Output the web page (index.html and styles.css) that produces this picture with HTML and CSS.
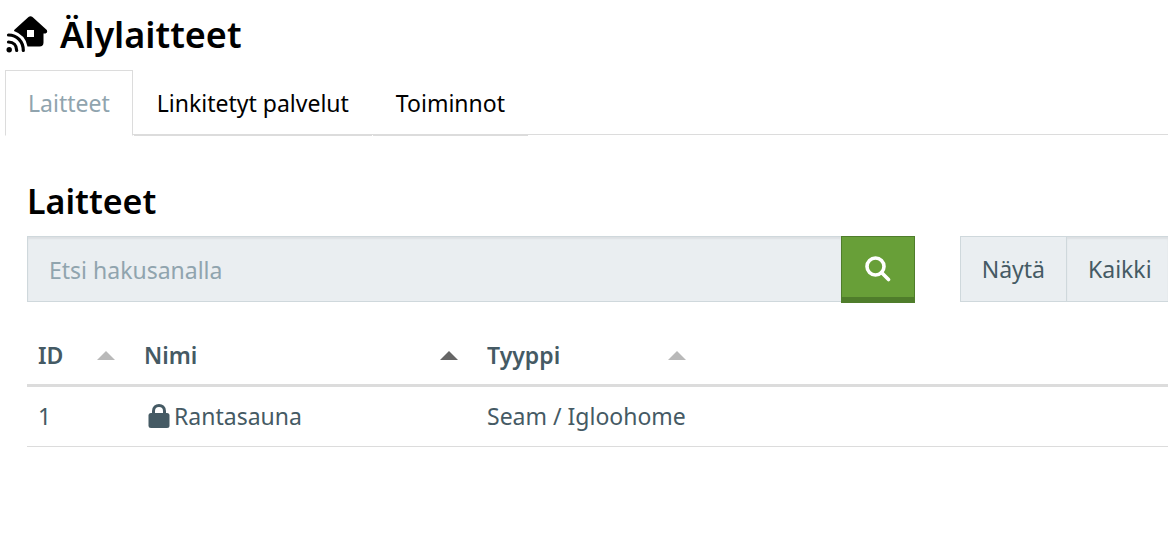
FILE: index.html
```html
<!DOCTYPE html>
<html lang="fi">
<head>
<meta charset="utf-8">
<meta name="viewport" content="width=device-width, initial-scale=1">
<title>Älylaitteet</title>
<link rel="stylesheet" href="styles.css">
</head>
<body>
<header class="page-header">
  <svg class="house-icon" viewBox="0 0 42 38" aria-hidden="true">
    <path fill="currentColor" fill-rule="evenodd" d="M22.500 1Q24.500 -.5 26.500 1L40.800 14Q42 16.500 39.500 17.500H37.500V26.500Q37.500 30.500 33.500 30.500H21.500Q19.500 19 8 15Q8 14 9 13.200L22.500 1ZM21 14V21H28V14Z"/>
    <circle cx="3.200" cy="33.800" r="2.700" fill="currentColor"/>
    <path fill="none" stroke="currentColor" stroke-width="3.200" stroke-linecap="round" d="M2.500 19C11 19 17.300 25.500 17.300 34.500M2.500 26C7.500 26 10.700 29.500 10.700 34.500"/>
  </svg>
  <h1 class="page-title">Älylaitteet</h1>
</header>
<nav class="tabs">
  <a class="tab tab-active" href="#laitteet" aria-current="page">Laitteet</a>
  <a class="tab" href="#palvelut">Linkitetyt palvelut</a>
  <a class="tab" href="#toiminnot">Toiminnot</a>
</nav>
<main class="panel" id="laitteet">
  <h2 class="panel-title">Laitteet</h2>
  <form class="toolbar">
    <div class="search">
      <input class="search-input" type="search" placeholder="Etsi hakusanalla" aria-label="Etsi hakusanalla">
      <button class="search-button" type="submit" aria-label="Etsi">
        <svg class="search-icon" viewBox="0 0 26 26" aria-hidden="true"><circle cx="10.500" cy="10.500" r="8.500"/><path d="M16.500 16.500L23.500 23.500"/></svg>
      </button>
    </div>
    <div class="filter">
      <label class="filter-label" for="show">Näytä</label>
      <select class="filter-select" id="show"><option>Kaikki</option></select>
    </div>
  </form>
  <table class="devices">
    <thead>
      <tr>
        <th class="col-id"><button class="sort" type="button">ID<span class="arrow"></span></button></th>
        <th class="col-name" aria-sort="ascending"><button class="sort" type="button">Nimi<span class="arrow arrow-on"></span></button></th>
        <th class="col-type"><button class="sort" type="button">Tyyppi<span class="arrow"></span></button></th>
        <th></th>
      </tr>
    </thead>
    <tbody>
      <tr>
        <td>1</td>
        <td><span class="device"><svg class="lock-icon" viewBox="0 0 22 24" aria-hidden="true"><rect x="0.500" y="9" width="21" height="15" rx="2.500" fill="currentColor"/><path fill="none" stroke="currentColor" stroke-width="3" d="M5.500 10V7C5.500 3.500 8 1.500 11 1.500S16.500 3.500 16.500 7V10"/></svg>Rantasauna</span></td>
        <td>Seam / Igloohome</td>
        <td></td>
      </tr>
    </tbody>
  </table>
</main>
</body>
</html>
```
FILE: styles.css
```css
* { box-sizing: border-box; }
body {
  margin: 0;
  background: #fff;
  color: #455a64;
  font: 23px/32px "Noto Sans", "Open Sans", sans-serif;
}
.page-header {
  display: flex;
  align-items: center;
  gap: 12px;
  height: 70px;
  padding-left: 6px;
  color: #000;
}
.house-icon { width: 42px; height: 38px; }
.page-title, .panel-title {
  margin: 0;
  color: #000;
  font-size: 36px;
  line-height: 48px;
  font-weight: 600;
}
.panel-title { font-size: 34px; }
.tabs {
  display: flex;
  gap: 1px;
  height: 65px;
  margin-left: 5px;
  border-bottom: 1px solid #dcdcdc;
}
.tab {
  height: 66px;
  padding: 17px 23px;
  border-bottom: 2px solid #dcdcdc;
  color: #000;
  text-decoration: none;
}
.tab-active {
  padding: 16px 22px;
  border: 1px solid #dcdcdc;
  border-bottom-color: #fff;
  background: #fff;
  color: #90a4ae;
}
.panel { padding: 42px 0 0 27px; }
.toolbar { display: flex; gap: 45px; margin-top: 11px; }
.search { display: flex; flex: 1; align-items: flex-start; }
.search-input {
  flex: 1;
  min-width: 0;
  height: 66px;
  padding: 2px 21px 0;
  border: 1px solid #cfd8dc;
  border-right: 0;
  border-radius: 0;
  background: #eaeef1;
  box-shadow: inset 0 2px 2px rgba(0, 0, 0, .06);
  color: #455a64;
  font: inherit;
  appearance: none;
}
.search-input::placeholder { color: #90a4ae; opacity: 1; }
.search-button {
  display: flex;
  align-items: center;
  justify-content: center;
  width: 74px;
  height: 67px;
  padding: 4px 0 0;
  border: 1px solid #4f7d2b;
  border-bottom-width: 6px;
  background: #689f38;
}
.search-icon {
  width: 26px;
  height: 26px;
  fill: none;
  stroke: #fff;
  stroke-width: 3.6;
  stroke-linecap: round;
}
.filter { display: flex; height: 66px; border: 1px solid #cfd8dc; border-right: 0; background: #eaeef1; }
.filter-label { padding: 16px 21px; border-right: 1px solid #cfd8dc; }
.filter-select {
  width: 101px;
  padding: 0 0 0 21px;
  border: 0;
  border-radius: 0;
  background: #eaeef1;
  box-shadow: inset 0 2px 2px rgba(0, 0, 0, .06);
  color: inherit;
  font: inherit;
  appearance: none;
}
.devices { width: 100%; margin-top: 24px; border-collapse: separate; border-spacing: 0; table-layout: fixed; }
.col-id { width: 106px; }
.col-name { width: 343px; }
.col-type { width: 228px; }
.devices th { padding: 12px 18px 13px 11px; border-bottom: 3px solid #dcdcdc; }
.devices td { padding: 13px 11px 14px; border-bottom: 1px solid #dcdcdc; }
.sort {
  display: flex;
  align-items: center;
  justify-content: space-between;
  width: 100%;
  padding: 0;
  border: 0;
  background: none;
  color: inherit;
  font: inherit;
  font-weight: 600;
}
.arrow { border: solid transparent; border-width: 0 9px 9px; border-bottom-color: #b9b9b9; }
.arrow-on { border-bottom-color: #666; }
.device { display: flex; align-items: center; gap: 4px; padding-left: 4px; }
.lock-icon { width: 22px; height: 24px; }
```
